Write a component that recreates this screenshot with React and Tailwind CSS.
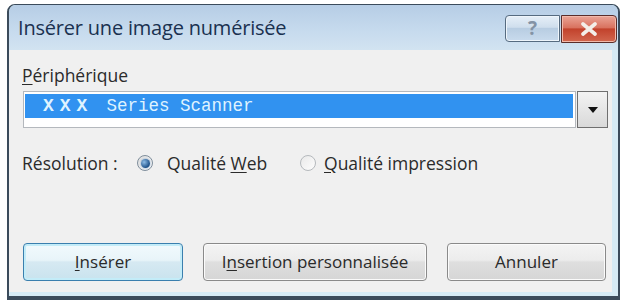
import React from "react";

function Radio({ checked }) {
  return (
    <span
      className={
        "relative inline-flex h-[16px] w-[16px] shrink-0 items-center justify-center rounded-full border " +
        (checked
          ? "border-[#7f8e9c] bg-gradient-to-br from-[#dcdcdc] to-[#fbfbfb]"
          : "border-[#b5b9bd] bg-gradient-to-br from-[#e9e9e9] to-[#fdfdfd]")
      }
    >
      {checked && (
        <span className="h-[9px] w-[9px] rounded-full bg-[radial-gradient(circle_at_35%_35%,#8dbce6,#1c4f87_70%)] shadow-[0_0_2px_#5a8fc4]" />
      )}
    </span>
  );
}

function Btn({ w, children, def }) {
  return (
    <div
      className={
        "flex h-[38px] items-center justify-center rounded-[4px] border text-[17px] text-[#2a2a2a] " +
        w +
        (def
          ? " border-[#3a7fae] bg-[linear-gradient(#f2fafd,#e8f4f9_45%,#d6e9f2_50%,#c9e3ee)] shadow-[inset_0_0_0_2px_#c3ecf8]"
          : " border-[#8a8a8a] bg-[linear-gradient(#f4f4f4,#ececec_45%,#dfdfdf_50%,#d6d6d6)] shadow-[inset_0_0_0_1px_#fbfbfb]")
      }
    >
      {children}
    </div>
  );
}

export default function App() {
  return (
    <div
      className="h-[300px] w-[624px] overflow-hidden bg-white pl-[7px] pr-[4px] pt-[4px]"
      style={{ fontFamily: '"Open Sans", "Noto Sans", sans-serif' }}
    >
      <div className="flex h-[296px] flex-col rounded-t-[8px] border-b-[4px] border-l-2 border-r-2 border-t border-[#3b4b5b] bg-[#d6ebf5]">
        {/* title bar */}
        <div className="flex h-[45px] items-start rounded-t-[7px] bg-[linear-gradient(#b6cde5,#c7dbee_60%,#d2e3f1)] pl-[9px] pr-[1px]">
          <div className="mt-[10px] flex-1 text-[20px] leading-[26px] tracking-[-0.2px] text-[#1a3150]">
            Insérer une image numérisée
          </div>
          <div className="mt-[10px] flex">
            <div className="flex h-[27px] w-[55px] items-center justify-center rounded-l-[4px] border border-[#566b80] bg-[linear-gradient(#e6eff8,#cfdeed_45%,#b8cde2_50%,#c9dbed)] shadow-[inset_0_0_0_1px_#eef5fb]">
              <span className="text-[19px] font-bold leading-none text-[#8493a5]">?</span>
            </div>
            <div className="ml-[1px] flex h-[28px] w-[56px] items-center justify-center rounded-r-[4px] border border-[#5a2d2a] bg-[linear-gradient(#eaa496,#d9725f_45%,#c2422c_50%,#d2674f)] shadow-[inset_0_0_0_1px_#f2b9ab]">
              <svg width="18" height="14" viewBox="0 0 18 14">
                <path d="M3 2 L15 12 M15 2 L3 12" stroke="#f3efe9" strokeWidth="3.6" strokeLinecap="round" />
              </svg>
            </div>
          </div>
        </div>
        {/* client */}
        <div className="mb-[4px] mr-[6px] flex flex-1 flex-col bg-[#f0f0f0] pl-[13px] pt-[15px] text-[17.5px] text-[#2b2b2b]">
          <div className="h-[20px] leading-[20px]">
            <span className="underline underline-offset-2">P</span>ériphérique
          </div>
          <div className="ml-[1px] mt-[6px] flex h-[37px] w-[585px]">
            <div className="flex-1 border border-[#b4b8bd] bg-white pl-[1px] pr-[2px] pt-[2px]">
              <div
                className="flex h-[24px] items-center bg-[#3192f0] pl-[18px] text-[#dff3ff]"
                style={{ fontFamily: '"Liberation Mono", "DejaVu Sans Mono", monospace' }}
              >
                <span className="text-[18px] font-bold tracking-[6px]">XXX</span>
                <span className="ml-[13px] text-[17.5px]">Series Scanner</span>
              </div>
            </div>
            <div className="ml-[1px] flex w-[31px] items-center justify-center border border-[#6f6f6f] bg-[linear-gradient(#f3f3f3,#e6e6e6_50%,#d9d9d9)]">
              <svg width="10" height="6" viewBox="0 0 10 6">
                <path d="M0 0 H10 L5 6 Z" fill="#111" />
              </svg>
            </div>
          </div>
          <div className="mt-[23px] flex h-[24px] items-center">
            <span className="w-[115px]">Résolution :</span>
            <Radio checked />
            <span className="ml-[14px] w-[133px]">
              Qualité <span className="underline underline-offset-2">W</span>eb
            </span>
            <Radio />
            <span className="ml-[8px]">
              <span className="underline underline-offset-2">Q</span>ualité impression
            </span>
          </div>
          <div className="ml-[1px] mt-[68px] flex gap-[20px]">
            <Btn w="w-[160px]" def>
              <span className="underline underline-offset-2">I</span>nsérer
            </Btn>
            <Btn w="w-[224px]">
              I<span className="underline underline-offset-2">n</span>sertion personnalisée
            </Btn>
            <Btn w="w-[159px]">Annuler</Btn>
          </div>
        </div>
      </div>
    </div>
  );
}
